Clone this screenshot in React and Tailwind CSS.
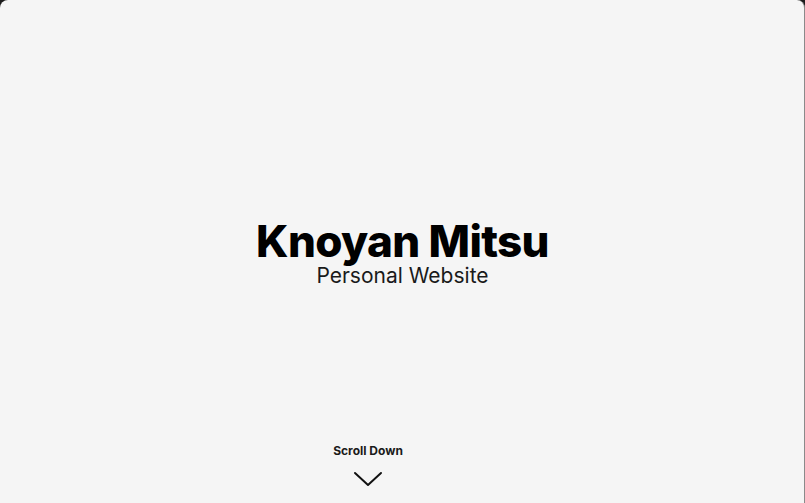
import React from "react";

const App = () => {
    return (
        <div className="w-full h-[503px] bg-[#1c1c1c] overflow-hidden" style={{ fontFamily: "Inter, 'Noto Sans', sans-serif" }}>
            <div className="relative w-full h-full bg-[#f5f5f5] rounded-t-[8px] border-r border-[#8a8a8a] flex flex-col items-center justify-center">
                <div className="flex flex-col items-center pl-[1px]">
                    <h1 className="text-[44px] leading-[48px] font-extrabold tracking-[-0.015em] text-black">Knoyan Mitsu</h1>
                    <span className="text-[21px] leading-[22px] text-[#1a1a1a]">Personal Website</span>
                </div>

                <div className="absolute left-[332px] top-[442px] w-[72px] flex flex-col items-center">
                    <span className="text-[12px] font-bold text-[#1a1a1a]">Scroll Down</span>
                    <svg className="mt-[11px]" width="30" height="16" viewBox="0 0 30 16" fill="none">
                        <path d="M2 2 L15 14 L28 2" stroke="#111" strokeWidth="2" strokeLinecap="round" strokeLinejoin="round" />
                    </svg>
                </div>
            </div>
        </div>
    );
};

export default App;
